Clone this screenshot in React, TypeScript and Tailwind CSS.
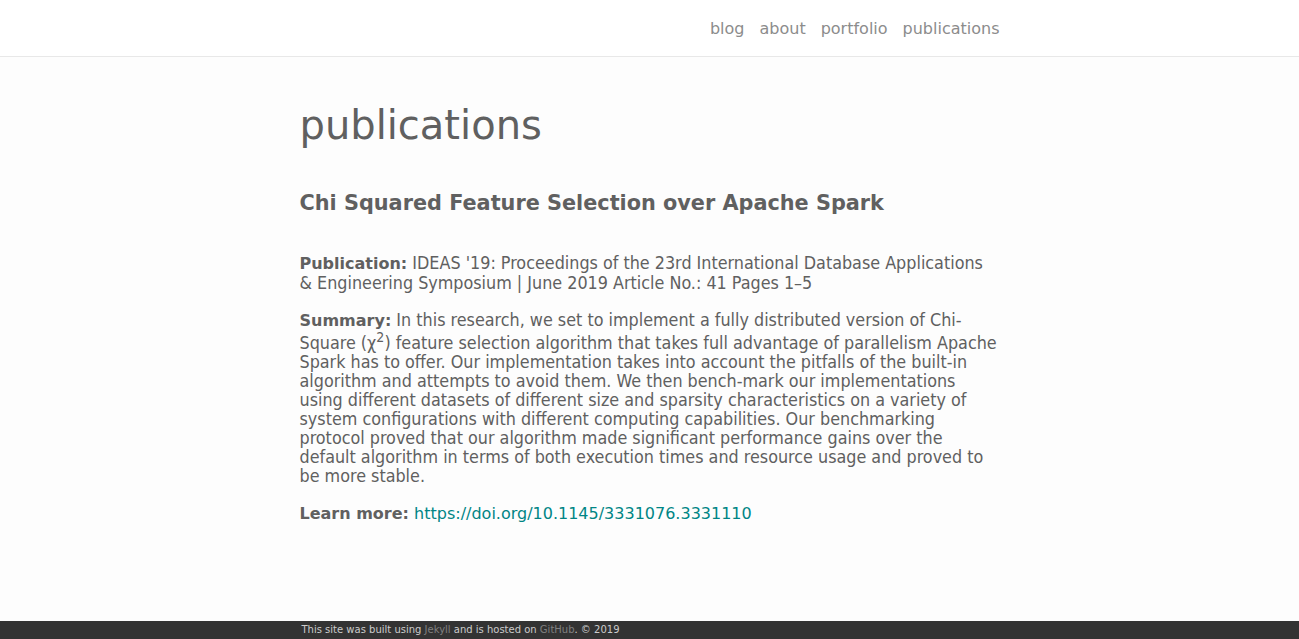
import React from "react";

export default function App() {
  return (
    <div className="min-h-[639px] flex flex-col bg-[#fdfdfd] text-[#606060]" style={{ fontFamily: '"DejaVu Sans", sans-serif' }}>
      <header className="h-[57px] border-b border-[#e8e8e8] bg-white">
        <div className="w-[700px] mx-auto h-full flex items-center justify-end gap-[15px] text-[16px] text-[#8c8c8c] pt-[2px]">
          <a>blog</a>
          <a>about</a>
          <a>portfolio</a>
          <a>publications</a>
        </div>
      </header>
      <main className="flex-1 w-[700px] mx-auto pt-[38px]">
        <h1 className="text-[40px] leading-[60px]">publications</h1>
        <h2 className="mt-[33px] text-[20.8px] font-bold leading-[30px]">Chi Squared Feature Selection over Apache Spark</h2>
        <div className="mt-[35px] text-[17.8px] leading-[19px]" style={{ fontStretch: "condensed" }}>
          <p><b className="text-[16px]" style={{ fontStretch: "normal" }}>Publication:</b> IDEAS '19: Proceedings of the 23rd International Database Applications<br />&amp; Engineering Symposium | June 2019 Article No.: 41 Pages 1–5</p>
          <p className="mt-[18px]"><b className="text-[16px]" style={{ fontStretch: "normal" }}>Summary:</b> In this research, we set to implement a fully distributed version of Chi-Square (χ<sup className="static align-super text-[14px] leading-none">2</sup>) feature selection algorithm that takes full advantage of parallelism Apache Spark has to offer. Our implementation takes into account the pitfalls of the built-in algorithm and attempts to avoid them. We then bench-mark our implementations using different datasets of different size and sparsity characteristics on a variety of system configurations with different computing capabilities. Our benchmarking protocol proved that our algorithm made significant performance gains over the default algorithm in terms of both execution times and resource usage and proved to be more stable.</p>
          <p className="mt-[19px] text-[16px]" style={{ fontStretch: "normal" }}><b>Learn more:</b> <a className="text-[#008585]">https://doi.org/10.1145/3331076.3331110</a></p>
        </div>
      </main>
      <footer className="h-[18px] bg-[#333333] text-[10px] leading-[18px] text-[#cccccc]">
        <div className="w-[700px] mx-auto pl-[2px]">
          This site was built using <a className="text-[#808080]">Jekyll</a> and is hosted on <a className="text-[#808080]">GitHub</a>. © 2019
        </div>
      </footer>
    </div>
  );
}
